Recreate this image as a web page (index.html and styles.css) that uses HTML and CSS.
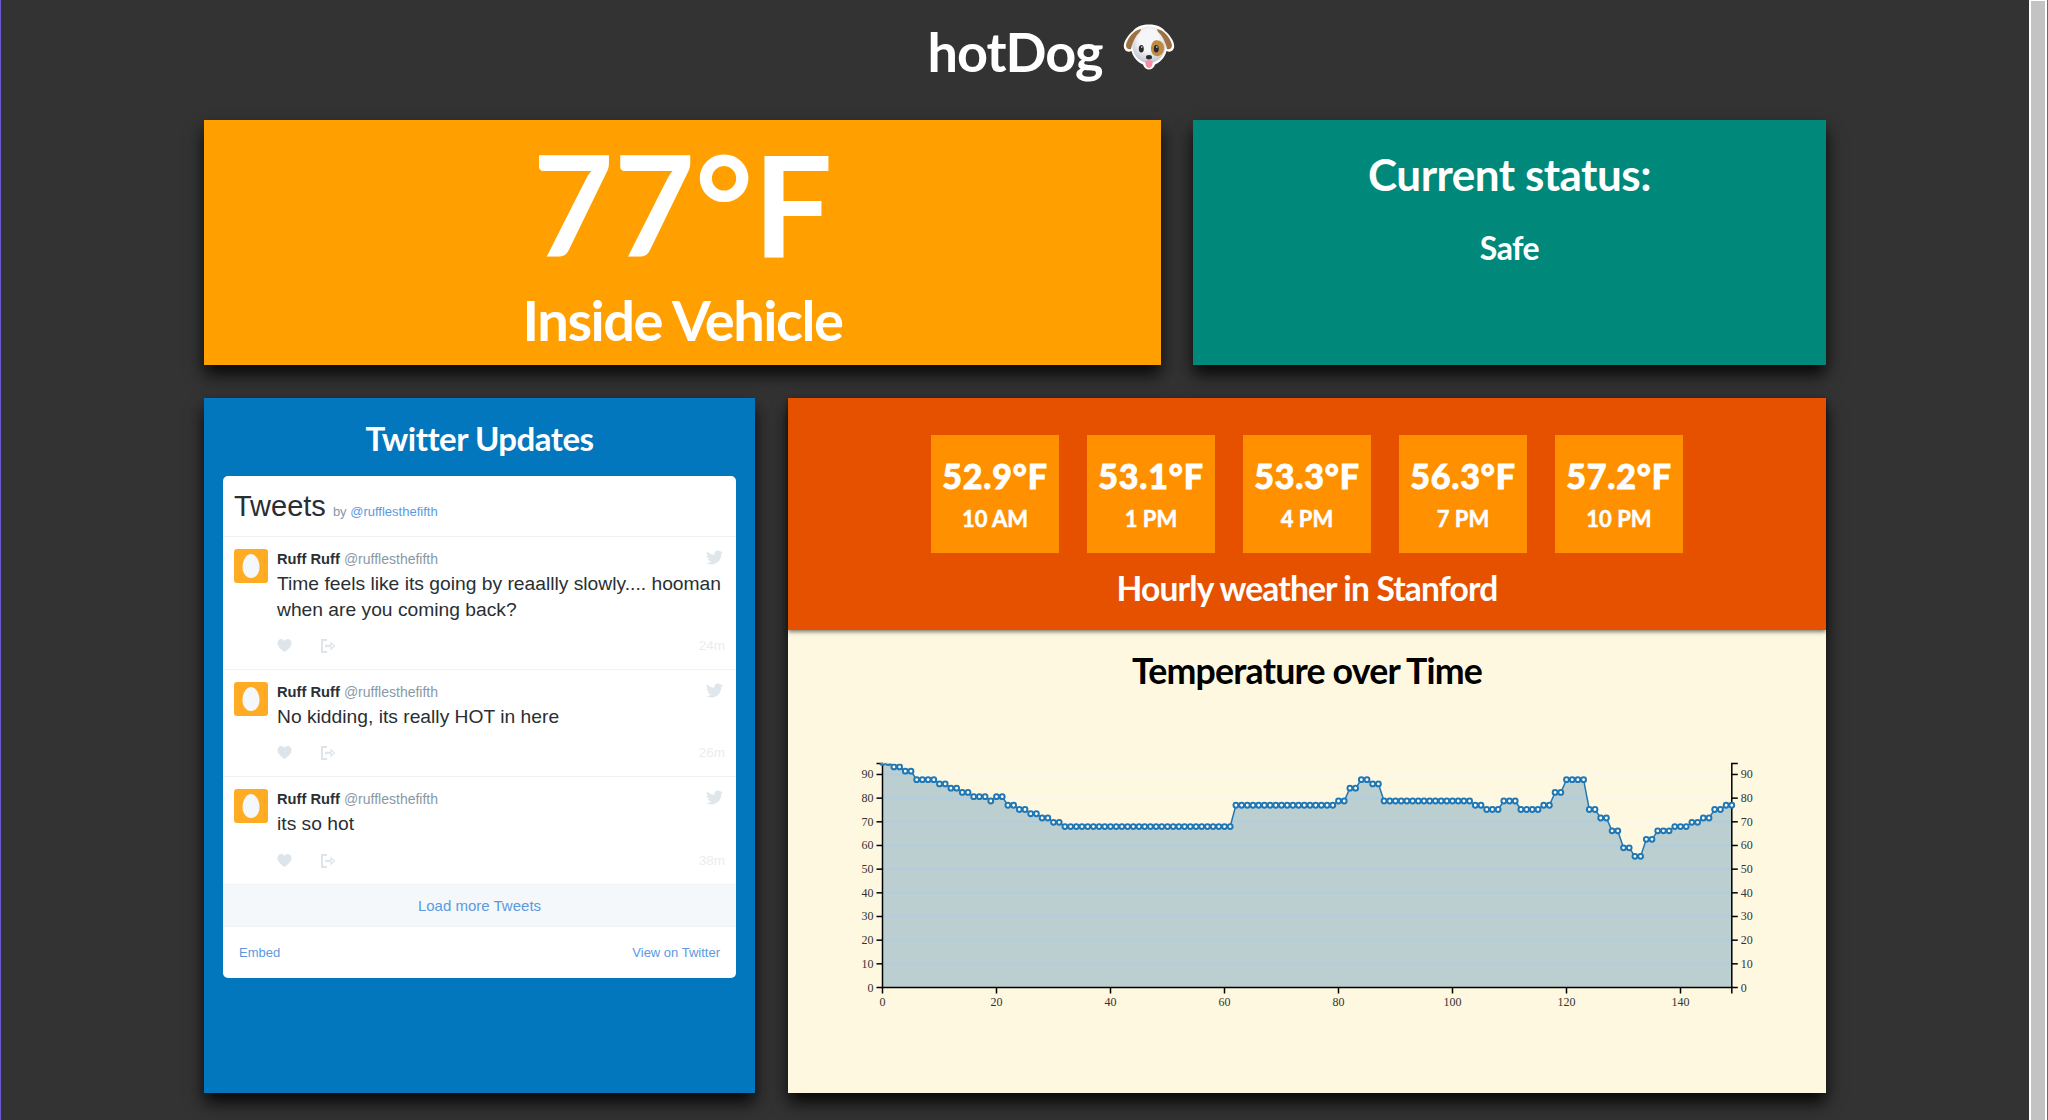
FILE: index.html
```html
<!DOCTYPE html>
<html lang="en">
<head>
    <meta charset="UTF-8">
    <title>hotDog</title>
    <link rel="stylesheet" href="styles.css">
</head>
<body>
    <svg class="sprites" width="0" height="0">
        <symbol id="bird" viewBox="0 0 24 24">
            <path d="M23.954 4.569c-.885.389-1.83.654-2.825.775 1.014-.611 1.794-1.574 2.163-2.723-.951.555-2.005.959-3.127 1.184-.896-.959-2.173-1.559-3.591-1.559-2.717 0-4.92 2.203-4.92 4.917 0 .39.045.765.127 1.124C7.691 8.094 4.066 6.13 1.64 3.161c-.427.722-.666 1.561-.666 2.475 0 1.71.87 3.213 2.188 4.096-.807-.026-1.566-.248-2.228-.616v.061c0 2.385 1.693 4.374 3.946 4.827-.413.111-.849.171-1.296.171-.314 0-.615-.03-.916-.086.631 1.953 2.445 3.377 4.604 3.417-1.68 1.319-3.809 2.105-6.102 2.105-.39 0-.779-.023-1.17-.067 2.189 1.394 4.768 2.209 7.557 2.209 9.054 0 13.999-7.496 13.999-13.986 0-.209 0-.42-.015-.63.961-.689 1.8-1.56 2.46-2.548l-.047-.02z"/>
        </symbol>
        <symbol id="heart" viewBox="0 0 16 16">
            <path d="M8 15C5 12.6 .5 9.2 .5 5.2 .5 2.8 2.3 1 4.4 1 5.9 1 7.300 1.900 8 3.200 8.700 1.900 10.100 1 11.600 1c2.100 0 3.900 1.800 3.900 4.200C15.500 9.200 11 12.600 8 15z"/>
        </symbol>
        <symbol id="share" viewBox="0 0 16 16">
            <path d="M1 1h6v2H3v10h4v2H1zM10.500 3.500 15.500 8l-5 4.500V9.200H5V6.800h5.500z M11.700 6.200v1.700H6.200v.3h5.500v1.600L13.700 8z" fill-rule="evenodd"/>
        </symbol>
        <symbol id="egg" viewBox="0 0 34 34">
            <rect width="34" height="34" rx="3" fill="#ffac24"/>
            <path d="M17 5c-4.500 0-8.500 6-8.500 13 0 6 3.500 11 8.500 11s8.500-5 8.500-11C25.500 11 21.500 5 17 5z" fill="#f5f8fa"/>
        </symbol>
        <radialGradient id="dog-face" cx="50%" cy="38%" r="60%">
            <stop offset="0.5" stop-color="#f6f6f8"/>
            <stop offset="1" stop-color="#c4c7d2"/>
        </radialGradient>
    </svg>

    <div class="window">
        <div class="page">
            <header class="brand">
                <h1>hotDog</h1>
                <svg class="dog" viewBox="0 0 52 46" width="52" height="46">
                    <path d="M26 .5C18 .5 13 3 10 7 5 11 1 17 .8 22c0 4 3.200 6.500 6.200 5.500l1.500-.5C10 34 16 39 20 40.500 21 44 23.500 45.500 26 45.500s5-1.500 6-5C36 39 42 34 43.500 27l1.500.5c3 1 6.200-1.500 6.200-5.500C51 17 47 11 42 7 39 3 34 .5 26 .5z" fill="#fff"/>
                    <path d="M26 2.500C17 2.500 11 9 9.500 18 8 30 16 38.500 26 39c10-.5 18-9 16.500-21C41 9 35 2.500 26 2.500z" fill="url(#dog-face)"/>
                    <path d="M18 5C11 6 5 13 3 21c0 4 3 5 5 4 1-5 3-10 6-14 2-2 4-4 4-6z" fill="#9f7141"/>
                    <path d="M34 5c7 1 13 8 15 16 0 4-3 5-5 4-1-5-3-10-6-14-2-2-4-4-4-6z" fill="#9f7141"/>
                    <path d="M32 16.500c5-1 9 2.500 9 7.500s-4 9-8 8c-4-1-5.500-5-5-9 .5-3 2-6 4-6.500z" fill="#c08a3e"/>
                    <ellipse cx="18.300" cy="24.700" rx="2.500" ry="3.800" fill="#2a2a2e"/>
                    <ellipse cx="33.300" cy="24.700" rx="2.500" ry="3.800" fill="#2a2a2e"/>
                    <circle cx="18.800" cy="23" r="0.800" fill="#fff"/>
                    <circle cx="33.800" cy="23" r="0.800" fill="#fff"/>
                    <path d="M22.500 37c2-1 5-1 7 0 .8 3.500-1 7-3.500 7s-4.300-3.500-3.500-7z" fill="#f78ea6"/>
                    <ellipse cx="26" cy="33.200" rx="3" ry="2.200" fill="#2a2a30"/>
                </svg>
            </header>

            <div class="row row-top">
                <section class="card card-temp">
                    <div class="temp-value">77°F</div>
                    <div class="temp-label">Inside Vehicle</div>
                </section>
                <section class="card card-status">
                    <h2>Current status:</h2>
                    <p>Safe</p>
                </section>
            </div>

            <div class="row row-bottom">
                <section class="card card-twitter">
                    <h2>Twitter Updates</h2>
                    <div class="timeline">
                        <div class="timeline-head">
                            <span class="timeline-title">Tweets</span>
                            <span class="timeline-by">by <a>@rufflesthefifth</a></span>
                        </div>

                        <article class="tweet tweet-long">
                            <svg class="avatar"><use href="#egg"/></svg>
                            <div class="tweet-body">
                                <div class="tweet-author"><b>Ruff Ruff</b> <span>@rufflesthefifth</span></div>
                                <p>Time feels like its going by reaallly slowly.... hooman when are you coming back?</p>
                            </div>
                            <svg class="bird"><use href="#bird"/></svg>
                            <div class="tweet-actions">
                                <svg class="act-heart"><use href="#heart"/></svg>
                                <svg class="act-share"><use href="#share"/></svg>
                                <time>24m</time>
                            </div>
                        </article>

                        <article class="tweet">
                            <svg class="avatar"><use href="#egg"/></svg>
                            <div class="tweet-body">
                                <div class="tweet-author"><b>Ruff Ruff</b> <span>@rufflesthefifth</span></div>
                                <p>No kidding, its really HOT in here</p>
                            </div>
                            <svg class="bird"><use href="#bird"/></svg>
                            <div class="tweet-actions">
                                <svg class="act-heart"><use href="#heart"/></svg>
                                <svg class="act-share"><use href="#share"/></svg>
                                <time>26m</time>
                            </div>
                        </article>

                        <article class="tweet tweet-last">
                            <svg class="avatar"><use href="#egg"/></svg>
                            <div class="tweet-body">
                                <div class="tweet-author"><b>Ruff Ruff</b> <span>@rufflesthefifth</span></div>
                                <p>its so hot</p>
                            </div>
                            <svg class="bird"><use href="#bird"/></svg>
                            <div class="tweet-actions">
                                <svg class="act-heart"><use href="#heart"/></svg>
                                <svg class="act-share"><use href="#share"/></svg>
                                <time>38m</time>
                            </div>
                        </article>

                        <div class="load-more">Load more Tweets</div>
                        <div class="timeline-foot">
                            <a>Embed</a>
                            <a>View on Twitter</a>
                        </div>
                    </div>
                </section>

                <section class="card card-weather">
                    <div class="forecast">
                        <div class="hours">
                            <div class="hour"><strong>52.9°F</strong><span>10 AM</span></div>
                            <div class="hour"><strong>53.1°F</strong><span>1 PM</span></div>
                            <div class="hour"><strong>53.3°F</strong><span>4 PM</span></div>
                            <div class="hour"><strong>56.3°F</strong><span>7 PM</span></div>
                            <div class="hour"><strong>57.2°F</strong><span>10 PM</span></div>
                        </div>
                        <h3>Hourly weather in Stanford</h3>
                    </div>
                    <div class="history">
                        <h3>Temperature over Time</h3>
                        <svg id="chart" width="1038" height="353"></svg>
                    </div>
                </section>
            </div>
        </div>
        <div class="scrollbar"><div class="scroll-thumb"></div></div>
    </div>

    <script src="chart.js"></script>
</body>
</html>
```

FILE: styles.css
```css
html, body {
    margin: 0;
    height: 100%;
    overflow: hidden;
}

body {
    background-color: #333;
    font-family: Lato, sans-serif;
    color: #fff;
}

.sprites {
    display: block;
    height: 0;
}

.window {
    display: flex;
    height: 1120px;
    border-left: 1px solid #6a5acd;
    border-right: 1px solid #6a5acd;
    box-sizing: border-box;
}

.page {
    flex: 1;
    min-width: 0;
    display: flex;
    flex-direction: column;
    align-items: center;
}

.scrollbar {
    width: 18px;
    background-color: #fff;
    padding: 1px 2px 0;
    box-sizing: border-box;
}

.scroll-thumb {
    height: 100%;
    background-color: #c3c3c3;
}

/* header */
.brand {
    height: 120px;
    margin-left: 72px;
    display: flex;
    justify-content: center;
    align-items: flex-start;
    gap: 20px;
}

.brand h1 {
    margin: 18px 0 0;
    font-size: 54px;
    line-height: 68px;
    font-weight: 700;
    letter-spacing: -1px;
}

.dog {
    margin-top: 24px;
}

/* cards */
.row {
    width: 1622px;
    display: flex;
}

.row-top {
    gap: 32px;
    height: 245px;
    margin-bottom: 33px;
}

.row-bottom {
    gap: 33px;
    height: 695px;
}

.card {
    box-shadow: 0 10px 16px rgba(0,0,0,0.85);
    text-align: center;
}

.card-temp {
    width: 957px;
    background-color: #ffa000;
}

.temp-value {
    font-size: 140px;
    line-height: 166px;
    font-weight: 700;
}

.temp-label {
    font-size: 56px;
    line-height: 68px;
    font-weight: 700;
    letter-spacing: -1.500px;
}

.card-status {
    flex: 1;
    background-color: #00897b;
}

.card-status h2 {
    margin: 0;
    padding-top: 27px;
    font-size: 44px;
    line-height: 54px;
    font-weight: 700;
    letter-spacing: -0.5px;
}

.card-status p {
    margin: 27px 0 0;
    font-size: 32px;
    line-height: 40px;
    font-weight: 700;
    letter-spacing: -0.5px;
}

/* twitter */
.card-twitter {
    width: 551px;
    background-color: #0277bd;
    padding: 18px 19px 0;
    box-sizing: border-box;
}

.card-twitter h2 {
    margin: 0 0 15px;
    font-size: 33px;
    line-height: 45px;
    font-weight: 700;
    letter-spacing: -0.5px;
}

.timeline {
    height: 502px;
    background-color: #fff;
    border-radius: 5px;
    font-family: "Liberation Sans", Arial, sans-serif;
    text-align: left;
    color: #292f33;
    overflow: hidden;
    display: flex;
    flex-direction: column;
}

.timeline a {
    color: #5b9ae0;
}

.timeline-head {
    height: 61px;
    box-sizing: border-box;
    padding: 0 11px;
    border-bottom: 1px solid #eef3f7;
    display: flex;
    align-items: baseline;
    gap: 7px;
}

.timeline-title {
    font-size: 29px;
    line-height: 60px;
}

.timeline-by {
    font-size: 13px;
    color: #8899a6;
}

.tweet {
    height: 107px;
    box-sizing: border-box;
    border-bottom: 1px solid #eef3f7;
    padding: 11.500px 11px 0;
    position: relative;
    display: grid;
    grid-template-columns: 34px 1fr;
    grid-template-rows: auto 1fr;
    column-gap: 9px;
}

.tweet-long {
    height: 133px;
}

.tweet-last {
    height: 108px;
}

.avatar {
    width: 34px;
    height: 34px;
}

.bird {
    position: absolute;
    top: 12px;
    right: 13px;
    width: 17px;
    height: 17px;
    fill: #dfe7ec;
}

.tweet-author {
    font-size: 14.700px;
    line-height: 20px;
}

.tweet-author span {
    font-size: 14px;
    color: #8899a6;
}

.tweet-body p {
    margin: 2px 0 0;
    font-size: 19.250px;
    line-height: 26px;
}

.tweet-actions {
    grid-column: 2;
    display: flex;
    align-items: center;
    height: 22px;
    margin-top: auto;
    margin-bottom: 12.500px;
    color: #e8edf1;
    font-size: 13.500px;
}

.act-heart {
    width: 15px;
    height: 15px;
    fill: #dde5eb;
}

.act-share {
    width: 16px;
    height: 16px;
    margin-left: 28px;
    fill: #dde5eb;
}

.tweet-actions time {
    margin-left: auto;
}

.load-more {
    height: 42px;
    box-sizing: border-box;
    border-bottom: 1px solid #eef3f7;
    background-color: #f5f8fa;
    color: #5b9ae0;
    font-size: 15px;
    line-height: 41px;
    text-align: center;
}

.timeline-foot {
    flex: 1;
    padding: 0 16px;
    display: flex;
    justify-content: space-between;
    align-items: center;
    font-size: 13px;
}

/* weather */
.card-weather {
    flex: 1;
    display: flex;
    flex-direction: column;
    background-color: #fff8e1;
}

.forecast {
    height: 232px;
    box-sizing: border-box;
    padding-top: 37px;
    background-color: #e65100;
    box-shadow: 0 2px 4px rgba(0,0,0,0.5);
    position: relative;
}

.hours {
    display: flex;
    justify-content: center;
    gap: 28px;
}

.hour {
    width: 128px;
    height: 118px;
    background-color: #ff9100;
    display: flex;
    flex-direction: column;
    align-items: center;
    font-weight: 700;
}

.hour strong {
    font-size: 34px;
    line-height: 40px;
    margin-top: 21px;
    letter-spacing: 0.8px;
    -webkit-text-stroke: 0.8px #fff;
}

.hour span {
    font-size: 22px;
    line-height: 30px;
    margin-top: 8px;
    -webkit-text-stroke: 0.5px #fff;
}

.forecast h3 {
    margin: 14px 0 0;
    font-size: 33.600px;
    line-height: 42px;
    font-weight: 700;
    letter-spacing: -0.850px;
}

.history {
    flex: 1;
}

.history h3 {
    margin: 0;
    height: 110px;
    box-sizing: border-box;
    padding-top: 19px;
    color: #000;
    font-size: 35.700px;
    line-height: 44px;
    font-weight: 700;
    letter-spacing: -0.800px;
}

#chart {
    display: block;
}

.grid-line {
    stroke: #fbf6ea;
    stroke-width: 2;
}

.grid-line-over {
    stroke: #a9cbe6;
    stroke-opacity: 0.45;
    stroke-width: 2;
}

.area {
    fill: #7aa5c0;
    fill-opacity: 0.5;
}

.line {
    fill: none;
    stroke: #1f77b4;
    stroke-width: 1.500;
}

.dot {
    fill: #fff;
    stroke: #1f77b4;
    stroke-width: 2;
}

.axis {
    stroke: #000;
    stroke-width: 1.500;
    fill: none;
}

.tick-label {
    font-family: "Liberation Serif", serif;
    font-size: 12px;
    fill: #333;
}
```

FILE: chart.js
```js
// temperature readings, one per sample
const runs = [
    [95, 2], [93.2, 2], [91.4, 2], [87.8, 4], [86, 2], [84.2, 2], [82.4, 2],
    [80.6, 3], [78.8, 1], [80.6, 2], [77, 2], [75.2, 2], [73.4, 2], [71.6, 2],
    [69.8, 2], [68, 30], [77, 18], [78.8, 2], [84.2, 2], [87.8, 2], [86, 2],
    [78.8, 16], [77, 2], [75.2, 3], [78.8, 3], [75.2, 4], [77, 2], [82.4, 2],
    [87.8, 4], [75.2, 2], [71.6, 2], [66.2, 2], [59, 2], [55.4, 2], [62.6, 2],
    [66.2, 3], [68, 3], [69.8, 2], [71.6, 2], [75.2, 2], [77, 2]
];

const temps = [];
runs.forEach(([value, count]) => {
    for (let i = 0; i < count; i++) temps.push(value);
});

const svg = document.getElementById('chart');
const originX = 94.5;
const originY = 247.5;
const stepX = 5.7;
const stepY = 2.367;
const rightX = originX + 149 * stepX;
const topY = 23.5;

const x = i => originX + i * stepX;
const y = t => originY - t * stepY;

function add(tag, attrs, text, parent) {
    const el = document.createElementNS('http://www.w3.org/2000/svg', tag);
    for (const key in attrs) el.setAttribute(key, attrs[key]);
    if (text !== undefined) el.textContent = text;
    (parent || svg).appendChild(el);
    return el;
}

const linePoints = temps.map((t, i) => x(i) + ',' + y(t)).join(' ');
const areaPoints = originX + ',' + originY + ' ' + linePoints + ' ' + rightX + ',' + originY;

// clip shapes: the plot box and the filled area
const defs = add('defs', {});
const plotClip = add('clipPath', { id: 'plot-clip' }, undefined, defs);
add('rect', { x: originX - 4, y: topY, width: rightX - originX + 8, height: originY - topY + 4 }, undefined, plotClip);
const areaClip = add('clipPath', { id: 'area-clip' }, undefined, defs);
add('polygon', { points: areaPoints }, undefined, areaClip);

// pale grid on the background, then the area, then blue grid inside the area
for (let t = 10; t <= 90; t += 10) {
    add('line', { class: 'grid-line', x1: originX, x2: rightX, y1: y(t), y2: y(t) });
}
add('polygon', { class: 'area', points: areaPoints });
for (let t = 10; t <= 90; t += 10) {
    add('line', { class: 'grid-line-over', x1: originX, x2: rightX, y1: y(t), y2: y(t), 'clip-path': 'url(#area-clip)' });
}

// y ticks
for (let t = 0; t <= 90; t += 10) {
    add('line', { class: 'axis', x1: originX - 6, x2: originX, y1: y(t), y2: y(t) });
    add('line', { class: 'axis', x1: rightX, x2: rightX + 6, y1: y(t), y2: y(t) });
    add('text', { class: 'tick-label', x: originX - 9, y: y(t) + 4, 'text-anchor': 'end' }, t);
    add('text', { class: 'tick-label', x: rightX + 9, y: y(t) + 4 }, t);
}

// x ticks
for (let i = 0; i <= 140; i += 20) {
    add('line', { class: 'axis', x1: x(i), x2: x(i), y1: originY, y2: originY + 6 });
    add('text', { class: 'tick-label', x: x(i), y: originY + 18, 'text-anchor': 'middle' }, i);
}

// axis lines with outer ticks
add('path', {
    class: 'axis',
    d: 'M' + (originX - 6) + ' ' + topY + 'H' + originX + 'V' + originY + 'H' + rightX + 'V' + (originY + 6)
});
add('path', {
    class: 'axis',
    d: 'M' + (rightX + 6) + ' ' + topY + 'H' + rightX + 'V' + originY
});

// line and dots, cut off at the top of the axis
const series = add('g', { 'clip-path': 'url(#plot-clip)' });
add('polyline', { class: 'line', points: linePoints }, undefined, series);
temps.forEach((t, i) => {
    add('circle', { class: 'dot', cx: x(i), cy: y(t), r: 2.4 }, undefined, series);
});
```
